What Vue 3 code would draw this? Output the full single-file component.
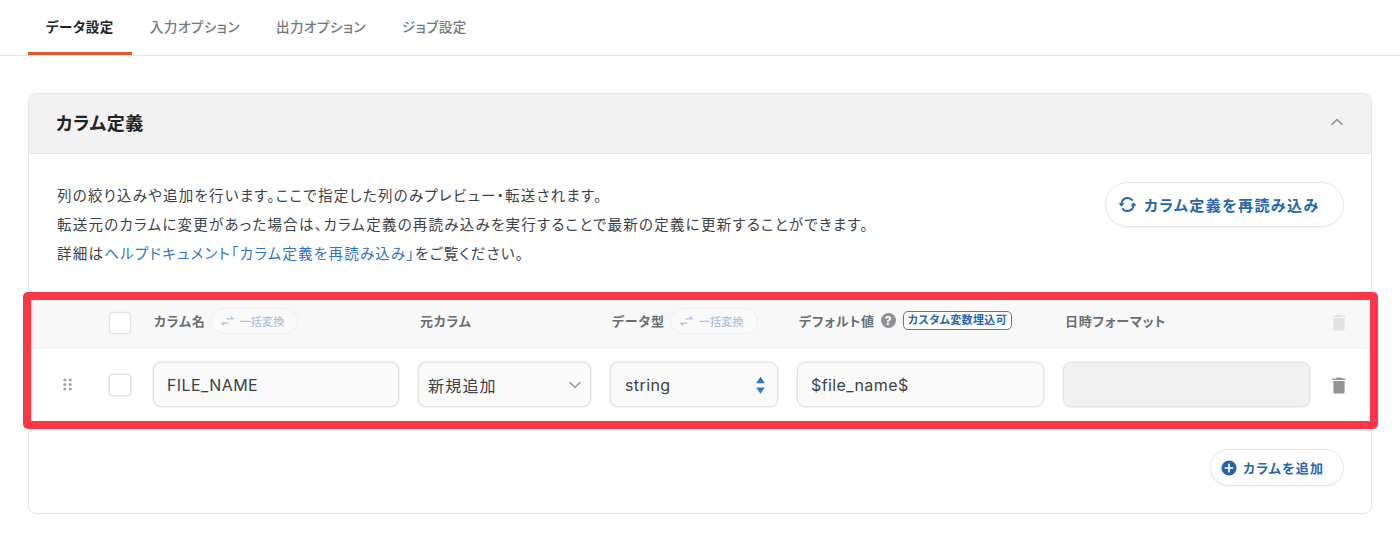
<script setup>
const tabs = ['データ設定', '入力オプション', '出力オプション', 'ジョブ設定']
</script>

<template>
  <div class="page">
    <nav class="tabs">
      <a v-for="(t, i) in tabs" :key="t" class="tab" :class="{ active: i === 0 }">{{ t }}</a>
    </nav>
    <section class="card">
      <header class="card-head">
        <h2>カラム定義</h2>
        <svg width="14" height="14" viewBox="0 0 14 14"><path d="M2 9.4 7 4.6l5 4.8" fill="none" stroke="#8f9499" stroke-width="1.5" stroke-linecap="round" stroke-linejoin="round"/></svg>
      </header>
      <div class="intro">
        <div class="desc">
          <p>列の絞り込みや追加を行います。ここで指定した列のみプレビュー・転送されます。</p>
          <p>転送元のカラムに変更があった場合は、カラム定義の再読み込みを実行することで最新の定義に更新することができます。</p>
          <p>詳細は<a>ヘルプドキュメント「カラム定義を再読み込み」</a>をご覧ください。</p>
        </div>
        <button class="pill big">
          <svg width="19" height="19" viewBox="0 0 20 20" fill="none"><g transform="matrix(-1 0 0 1 20 0)"><path d="M16.2 8.6A6.4 6.4 0 0 0 5 5.4" stroke="#2766ab" stroke-width="2" stroke-linecap="round"/><path d="M3.8 11.4A6.4 6.4 0 0 0 15 14.6" stroke="#2766ab" stroke-width="2" stroke-linecap="round"/><path d="M13.2 8.8h6.2l-3.1 3.6zM.6 11.2h6.2L3.7 7.6z" fill="#2766ab"/></g></svg>
          カラム定義を再読み込み
        </button>
      </div>
      <div class="table">
        <div class="grid thead">
          <span></span>
          <span class="check"></span>
          <div class="th"><b>カラム名</b>
            <span class="convert"><svg width="13" height="10" viewBox="0 0 13 10" fill="none"><path d="M6 2.8h6M10 .8l2.2 2" stroke="#a9c3e2" stroke-width="1.2" stroke-linecap="round"/><path d="M7 7.2H1M3 9.2.8 7.2" stroke="#a9c3e2" stroke-width="1.2" stroke-linecap="round"/></svg>一括変換</span>
          </div>
          <div class="th"><b>元カラム</b></div>
          <div class="th"><b>データ型</b>
            <span class="convert"><svg width="13" height="10" viewBox="0 0 13 10" fill="none"><path d="M6 2.8h6M10 .8l2.2 2" stroke="#a9c3e2" stroke-width="1.2" stroke-linecap="round"/><path d="M7 7.2H1M3 9.2.8 7.2" stroke="#a9c3e2" stroke-width="1.2" stroke-linecap="round"/></svg>一括変換</span>
          </div>
          <div class="th"><b>デフォルト値</b>
            <svg class="help" width="15" height="15" viewBox="0 0 15 15"><circle cx="7.5" cy="7.5" r="7.5" fill="#8b9095"/><text x="7.5" y="11.8" text-anchor="middle" font-size="12" font-weight="700" fill="#fff" font-family="Inter, sans-serif">?</text></svg>
            <span class="badge">カスタム変数埋込可</span>
          </div>
          <div class="th"><b>日時フォーマット</b></div>
          <svg class="trash head-trash" width="16" height="18" viewBox="0 0 16 18"><path d="M1.5 2.5h13v1.4h-13zM5.5 1.6h5v1h-5zM2.4 5h11.2v11a1.6 1.6 0 0 1-1.6 1.6H4A1.6 1.6 0 0 1 2.4 16z" fill="#e1e2e3"/></svg>
        </div>
        <div class="grid row">
          <svg class="drag" width="9" height="13" viewBox="0 0 10 14" fill="#a0a3a6"><circle cx="2" cy="2" r="1.7"/><circle cx="8" cy="2" r="1.7"/><circle cx="2" cy="7" r="1.7"/><circle cx="8" cy="7" r="1.7"/><circle cx="2" cy="12" r="1.7"/><circle cx="8" cy="12" r="1.7"/></svg>
          <span class="check"></span>
          <div class="field text">FILE_NAME</div>
          <div class="field select jp"><span>新規追加</span>
            <svg width="14" height="14" viewBox="0 0 14 14"><path d="M2 4.6 7 9.4l5-4.8" fill="none" stroke="#a0a4a8" stroke-width="1.6" stroke-linecap="round" stroke-linejoin="round"/></svg>
          </div>
          <div class="field select text2"><span>string</span>
            <svg width="9" height="18" viewBox="0 0 9 18" fill="#2f74bf"><path d="M4.5 0.8 8.8 7.2H.2z"/><path d="M4.5 17.8.2 11.4h8.6z"/></svg>
          </div>
          <div class="field text">$file_name$</div>
          <div class="field off"></div>
          <svg class="trash" width="16" height="18" viewBox="0 0 16 18"><path d="M1.5 2.5h13v1.4h-13zM5.5 1.6h5v1h-5zM2.4 5h11.2v11a1.6 1.6 0 0 1-1.6 1.6H4A1.6 1.6 0 0 1 2.4 16z" fill="#909497"/></svg>
        </div>
        <div class="highlight"></div>
      </div>
      <div class="foot">
        <button class="pill small">
          <svg width="16" height="16" viewBox="0 0 16 16"><circle cx="8" cy="8" r="7.6" fill="#2766ab"/><path d="M8 4.4v7.2M4.4 8h7.2" stroke="#fff" stroke-width="1.7" stroke-linecap="round"/></svg>
          カラムを追加
        </button>
      </div>
    </section>
  </div>
</template>

<style>
html, body { margin: 0; background: #fff; }
</style>

<style scoped>
.page {
  width: 1400px;
  height: 539px;
  overflow: hidden;
  font-family: Inter, "Noto Sans CJK JP", sans-serif;
  font-feature-settings: "palt";
  color: #3c4146;
}
.tabs {
  display: flex;
  height: 55px;
  padding-left: 28px;
  border-bottom: 1px solid #e6e6e6;
}
.tab {
  height: 55px;
  box-sizing: border-box;
  padding: 0 18px;
  line-height: 54px;
  font-size: 13.5px;
  font-weight: 500;
  letter-spacing: .04em;
  color: #74787c;
  white-space: nowrap;
}
.tab.active {
  color: #1f2326;
  font-weight: 700;
  border-bottom: 3px solid #df5a2b;
}
.card {
  margin: 37px 28px 0;
  border: 1px solid #e6e6e6;
  border-radius: 8px;
  height: 421px;
  box-sizing: border-box;
}
.card-head {
  height: 60px;
  box-sizing: border-box;
  padding: 0 27px 3px 27px;
  background: #f2f2f2;
  border-bottom: 1px solid #e6e6e6;
  border-radius: 7px 7px 0 0;
  display: flex;
  align-items: center;
  justify-content: space-between;
}
h2 {
  margin: 0;
  font-size: 18px;
  font-weight: 700;
  letter-spacing: .03em;
  color: #1f2326;
}
.intro {
  height: 145px;
  box-sizing: border-box;
  padding: 27px 27px 0 28px;
  display: flex;
  justify-content: space-between;
}
.desc p {
  margin: 0;
  font-size: 14.5px;
  line-height: 29px;
  letter-spacing: 1.24px;
  color: #3c4146;
}
.desc a { color: #2f74bf; }
.pill {
  display: flex;
  align-items: center;
  font-family: inherit;
  font-feature-settings: inherit;
  font-weight: 700;
  color: #2766ab;
  background: #fff;
  border: 1px solid #e6e6e6;
  border-radius: 999px;
  box-shadow: 0 1px 2px rgba(0,0,0,.04);
  white-space: nowrap;
  padding: 0;
}
.pill.big {
  width: 239px;
  height: 45px;
  padding-left: 12px;
  gap: 7px;
  font-size: 15px;
  letter-spacing: 1.45px;
  margin-top: 1px;
}
.table { position: relative; height: 122px; }
.grid {
  display: grid;
  grid-template-columns: 61px 25px 246px 173px 168px 247px 247px 1fr;
  column-gap: 19px;
  align-items: center;
}
.thead { height: 49px; background: #f8f8f8; border-bottom: 1px solid #f0f0f0; box-sizing: border-box; }
.row { height: 73px; }
.check {
  width: 22px;
  height: 22px;
  box-sizing: border-box;
  background: #fff;
  border: 1px solid #e1e1e1;
  box-shadow: 0 0 0 1px #f3f3f3;
  border-radius: 4px;
}
.thead .check { margin-top: -1px; }
.th {
  display: flex;
  align-items: center;
  white-space: nowrap;
  margin: -5px 0 0 1px;
  font-size: 13px;
  letter-spacing: .8px;
  color: #696e72;
}
.th:nth-child(3), .th:nth-child(5) { gap: 5px; }
.th:nth-child(4), .th:nth-child(5), .th:nth-child(6), .th:nth-child(7) { margin-left: 2px; }
.th b { font-weight: 700; }
.convert {
  display: inline-flex;
  align-items: center;
  gap: 6px;
  height: 26px;
  box-sizing: border-box;
  padding: 0 13px 0 9px;
  font-size: 11px;
  font-weight: 500;
  letter-spacing: .2px;
  color: #a9c3e2;
  border: 1px solid #f0f0f0;
  border-radius: 13px;
  background: #fafafa;
}
.help { margin: 0 7px 0 6px; flex: none; }
.badge {
  height: 19px;
  box-sizing: border-box;
  padding: 0 4px;
  line-height: 16px;
  font-size: 11px;
  font-weight: 700;
  letter-spacing: .4px;
  color: #2766ab;
  border: 1px solid #3f7fc4;
  border-radius: 5px;
  background: #fff;
}
.trash { margin-left: 2px; }
.head-trash { margin-top: -3px; }
.drag { margin-left: 34px; }
.field {
  height: 45px;
  box-sizing: border-box;
  background: #fafafa;
  border: 1px solid #e3e3e3;
  box-shadow: 0 0 0 1px #f3f3f3;
  border-radius: 8px;
  display: flex;
  align-items: center;
  font-size: 16px;
  letter-spacing: .4px;
  color: #3c4146;
}
.field.text { padding-left: 13px; }
.field.select { justify-content: space-between; padding: 0 8px 0 9px; }
.field.jp { letter-spacing: 1.2px; }
.field.text2 { padding-left: 14px; padding-right: 12px; }
.field.off { background: #f2f2f2; }
.highlight {
  position: absolute;
  left: -6px;
  right: -7px;
  top: -7px;
  bottom: -8px;
  border: 8px solid #fd3547;
  border-radius: 5px;
  pointer-events: none;
}
.foot {
  display: flex;
  justify-content: flex-end;
  padding: 28px 27px 0 0;
}
.pill.small {
  width: 134px;
  height: 37px;
  padding-left: 10px;
  gap: 6px;
  font-size: 13px;
  letter-spacing: 1.2px;
}
</style>
